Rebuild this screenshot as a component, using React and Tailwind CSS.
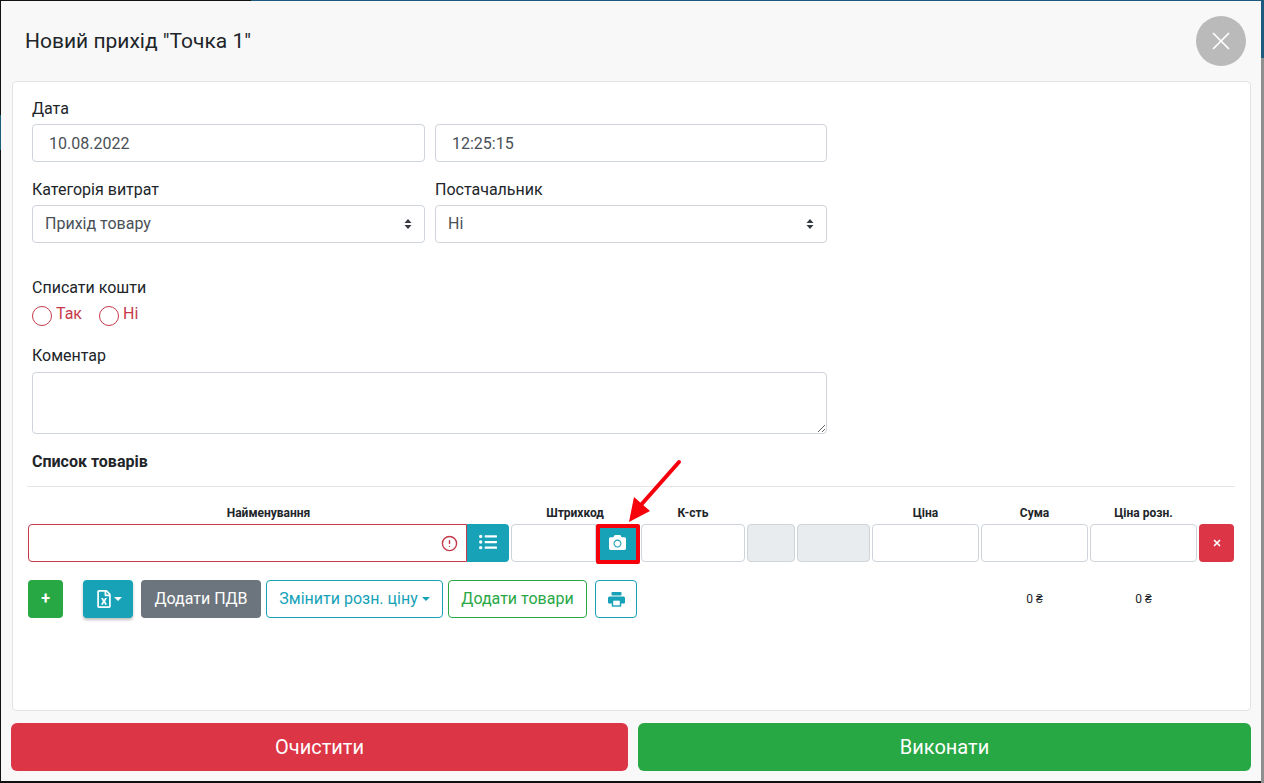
import React from 'react';
import { CircleAlert, X } from 'lucide-react';
import { FaCamera, FaListUl, FaRegFileExcel } from 'react-icons/fa';

const inputCls = 'h-[38px] w-full rounded-[4px] border border-[#ced4da] bg-white text-base text-[#495057] outline-none';

const SelectBox = ({ children }) => (
  <div className={`${inputCls} flex items-center justify-between pl-3 pr-[12px]`}>
    <span>{children}</span>
    <svg width="8" height="12" viewBox="0 0 8 12" className="text-[#343a40]">
      <path d="M4 1 L7.5 5 H0.5 Z M4 11 L0.5 7 H7.5 Z" fill="currentColor" />
    </svg>
  </div>
);

const Radio = ({ label }) => (
  <label className="flex items-start gap-[4px] text-base leading-5 text-[#c5394b]">
    <span className="mt-[2px] h-5 w-5 rounded-full border border-[#c5394b] bg-white" />
    {label}
  </label>
);

const PrintIcon = () => (
  <svg width="17" height="16" viewBox="0 0 17 16" fill="#17a2b8">
    <rect x="3.5" y="1" width="10" height="3.5" rx="0.8" />
    <path d="M1.5 5.5 H15.5 A1.5 1.5 0 0 1 17 7 V11.5 A1 1 0 0 1 16 12.5 H1 A1 1 0 0 1 0 11.5 V7 A1.5 1.5 0 0 1 1.5 5.5 Z" />
    <rect x="4.5" y="9" width="8" height="6" fill="#fff" stroke="#17a2b8" strokeWidth="1.4" />
  </svg>
);

const columns = [
  { title: 'Штрихкод', w: 'w-[128px]' },
  { title: 'К-сть', w: 'w-[104px]' },
  { title: '', w: 'w-[48px]' },
  { title: '', w: 'w-[73px]' },
  { title: 'Ціна', w: 'w-[107px]' },
  { title: 'Сума', w: 'w-[107px]' },
  { title: 'Ціна розн.', w: 'w-[107px]' },
];

const cell = 'h-[38px] rounded-[4px] border border-[#ced4da] bg-white';

export default function App() {
  return (
    <div className="flex h-[783px] w-[1264px] overflow-hidden bg-[#111] font-['Roboto',sans-serif] text-[#212529]">
      {/* what shows behind the modal */}
      <div className="flex w-[1px] flex-col bg-[#111]">
        <div className="mt-[115px] h-[35px] bg-[#1a5f7a]" />
      </div>
      <div className="flex h-[783px] w-[1260px] flex-col">
        <div className="flex h-[1px] shrink-0">
          <div className="w-[250px] bg-[#111]" />
          <div className="flex-1 bg-[#1d5a7e]" />
        </div>

        <div className="flex h-[780px] shrink-0 flex-col bg-[#f8f8f8] px-[10px]">
          {/* Header */}
          <div className="flex h-[80px] shrink-0 items-center justify-between pl-[14px] pr-[5px]">
            <h1 className="pb-[1px] text-[21px] font-normal leading-6 text-[#212529]">Новий прихід "Точка 1"</h1>
            <button className="flex h-[50px] w-[50px] items-center justify-center rounded-full bg-[#bababa] text-white">
              <X size={30} strokeWidth={1.4} />
            </button>
          </div>

          {/* Form card */}
          <div className="ml-[1px] h-[630px] w-[1239px] shrink-0 rounded-[4px] border border-[#e3e3e3] bg-white pt-[15px]">
            <div className="w-[815px] pl-[19px]">
              <div className="grid grid-cols-[393px_392px] gap-x-[10px] gap-y-[16px]">
                <div>
                  <div className="mb-[3px] text-base leading-6">Дата</div>
                  <div className={`${inputCls} flex items-center pl-[16px] pt-[2px]`}>10.08.2022</div>
                </div>
                <div>
                  <div className="mb-[3px] h-6" />
                  <div className={`${inputCls} flex items-center pl-[16px] pt-[2px]`}>12:25:15</div>
                </div>
                <div>
                  <div className="mb-[3px] text-base leading-6">Категорія витрат</div>
                  <SelectBox>Прихід товару</SelectBox>
                </div>
                <div>
                  <div className="mb-[3px] text-base leading-6">Постачальник</div>
                  <SelectBox>Ні</SelectBox>
                </div>
              </div>

              <div className="mt-[33px] mb-1 text-base leading-6">Списати кошти</div>
              <div className="flex h-[24px] items-start gap-[17px]">
                <Radio label="Так" />
                <Radio label="Ні" />
              </div>

              <div className="mt-[16px] mb-1 text-base leading-6">Коментар</div>
              <textarea className="block h-[62px] w-[795px] rounded-[4px] border border-[#ced4da] bg-white outline-none" />

              <div className="mt-[18px] text-base font-bold leading-5">Список товарів</div>
            </div>

            <div className="mx-[14px] mt-[14px] h-[1px] w-[1208px] bg-[#e5e5e5]" />

            {/* Goods table */}
            <div className="mt-[19px] flex gap-[2px] pl-[15px]">
              <div className="w-[481px] text-center text-xs font-bold leading-[14px]">Найменування</div>
              {columns.map((c, i) => (
                <div key={i} className={`${c.w} text-center text-xs font-bold leading-[14px]`}>{c.title}</div>
              ))}
            </div>

            <div className="mt-[4px] flex gap-[2px] pl-[15px]">
              <div className="flex w-[481px]">
                <div className="flex h-[38px] w-[439px] items-center justify-end rounded-l-[4px] border border-[#c5394b] bg-white pr-[8px] text-[#c5394b]">
                  <CircleAlert size={17} strokeWidth={2} />
                </div>
                <button className="flex h-[38px] w-[42px] items-center justify-center rounded-r-[4px] bg-[#17a2b8] pb-[3px] text-white">
                  <FaListUl size={18} />
                </button>
              </div>
              <div className="flex w-[128px]">
                <div className="h-[38px] w-[85px] shrink-0 rounded-l-[4px] border border-[#ced4da] bg-white" />
                <button className="flex h-[40px] w-[44px] shrink-0 items-center justify-center rounded-[2px] border-[4px] border-[#f5000b] bg-[#17a2b8] pb-[3px] pr-[1px] text-white">
                  <FaCamera size={17} />
                </button>
              </div>
              <div className={`${cell} relative w-[104px]`} />
              <div className="h-[38px] w-[48px] rounded-[4px] border border-[#ced4da] bg-[#e9ecef]" />
              <div className="h-[38px] w-[73px] rounded-[4px] border border-[#ced4da] bg-[#e9ecef]" />
              <div className={`${cell} w-[107px]`} />
              <div className={`${cell} w-[107px]`} />
              <div className={`${cell} w-[107px]`} />
              <button className="flex h-[38px] w-[35px] items-center justify-center rounded-[4px] bg-[#dc3545] text-white">
                <X size={10} strokeWidth={4} />
              </button>
            </div>

            {/* Actions under the table */}
            <div className="mt-[16px] flex items-center pl-[15px]">
              <button className="h-[38px] w-[35px] rounded-[4px] bg-[#28a745] text-base font-bold text-white">+</button>
              <button className="ml-[20px] flex h-[38px] w-[50px] items-center justify-center gap-[1px] rounded-[4px] bg-[#17a2b8] text-white shadow-[0_2px_3px_rgba(0,0,0,0.25)]">
                <FaRegFileExcel size={18} />
                <span className="h-0 w-0 border-x-[4px] border-t-[4px] border-x-transparent border-t-white" />
              </button>
              <button className="ml-[8px] h-[38px] w-[120px] rounded-[4px] bg-[#6c757d] text-base text-white">Додати ПДВ</button>
              <button className="ml-[5px] flex h-[38px] w-[177px] items-center justify-center gap-[4px] rounded-[4px] border border-[#17a2b8] bg-white text-base text-[#17a2b8]">
                Змінити розн. ціну
                <span className="h-0 w-0 border-x-[4px] border-t-[4px] border-x-transparent border-t-[#17a2b8]" />
              </button>
              <button className="ml-[5px] h-[38px] w-[139px] rounded-[4px] border border-[#28a745] bg-white text-base text-[#28a745]">Додати товари</button>
              <button className="ml-[8px] flex h-[38px] w-[42px] items-center justify-center rounded-[4px] border border-[#17a2b8] bg-white">
                <PrintIcon />
              </button>
              <div className="ml-[344px] w-[107px] text-center text-xs">0 ₴</div>
              <div className="ml-[2px] w-[107px] text-center text-xs">0 ₴</div>
            </div>
          </div>

          {/* Footer buttons */}
          <div className="mt-[12px] flex h-[48px] shrink-0 gap-[10px]">
            <button className="w-[617px] rounded-[6px] bg-[#dc3545] text-xl text-white">Очистити</button>
            <button className="w-[613px] rounded-[6px] bg-[#28a745] text-xl text-white">Виконати</button>
          </div>
        </div>

        <div className="h-[2px] flex-1 bg-[#111]" />
      </div>
      <div className="flex w-[3px] flex-col bg-[#8f8f8f]">
        <div className="h-[58px] bg-[#1d5a7e]" />
      </div>

      {/* red annotation arrow */}
      <svg className="pointer-events-none absolute left-0 top-0" width="1264" height="783">
        <path d="M679 462 L640 506" stroke="#f5000b" strokeWidth="4" strokeLinecap="round" fill="none" />
        <path d="M629 522 L634 497 L650 511 Z" fill="#f5000b" />
      </svg>
    </div>
  );
}
